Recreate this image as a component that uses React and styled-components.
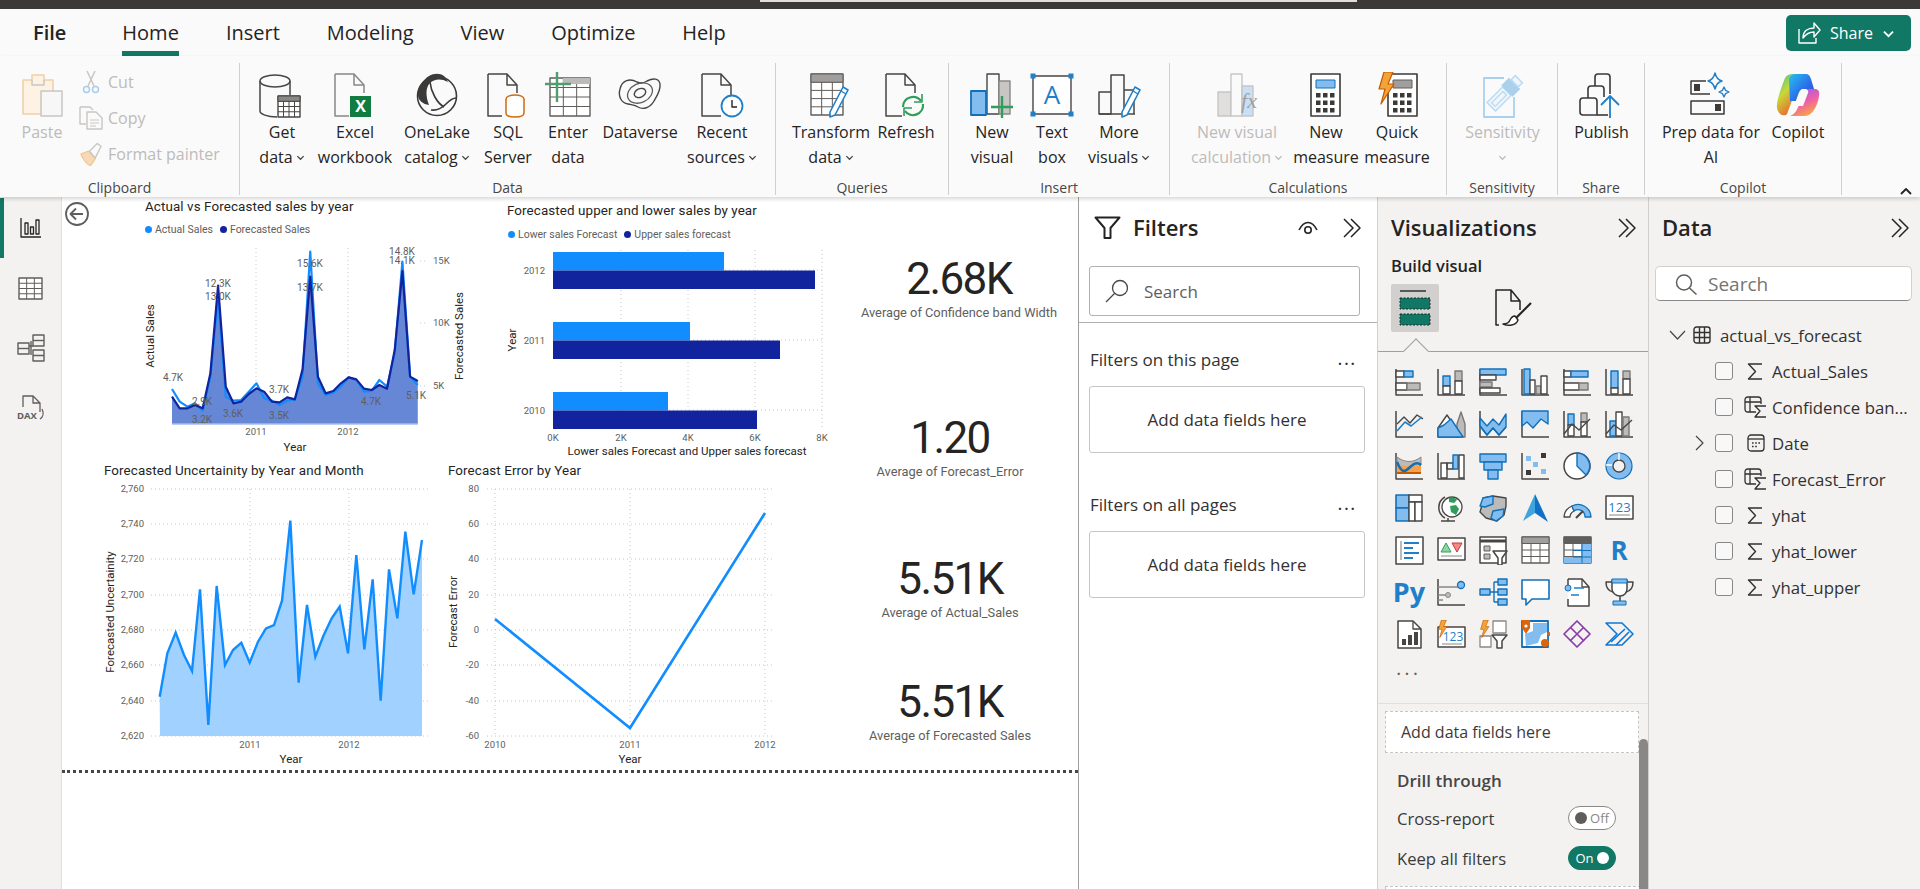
import React from 'react';
import styled, { createGlobalStyle } from 'styled-components';

const GREEN = '#117865';
const INK = '#484644';
const BLUE = '#118dff';
const NAVY = '#12239e';
const UI_FONT = '"Open Sans", "Noto Sans", sans-serif';
const CHART_FONT = 'Roboto, "Liberation Sans", sans-serif';

const Global = createGlobalStyle`
    html, body { margin: 0; padding: 0; background: #fff; }
    body { font-family: ${UI_FONT}; color: #252423; }
`;

const Page = styled.div`
    width: 1920px;
    height: 889px;
    overflow: hidden;
    display: flex;
    flex-direction: column;
`;
const TitleBar = styled.div`
    height: 9px;
    flex: none;
    background: #3b3a39;
`;
const TitleSlot = styled.div`
    width: 597px;
    height: 2px;
    margin-left: 760px;
    background: #e1dfdd;
`;
const TabRow = styled.div`
    height: 47px;
    flex: none;
    display: flex;
    padding-left: 33px;
    gap: 47px;
    background: #fafafa;
    position: relative;
`;
const Tab = styled.div`
    height: 47px;
    box-sizing: border-box;
    padding-top: 10px;
    line-height: 28px;
    font-size: 20px;
    font-weight: ${p => p.$weight || 400};
    margin-right: ${p => p.$after || 0}px;
    border-bottom: 5px solid ${p => (p.$active ? GREEN : 'transparent')};
`;
const ShareButton = styled.div`
    position: absolute;
    left: 1786px;
    top: 6px;
    width: 125px;
    height: 36px;
    border-radius: 5px;
    background: ${GREEN};
    color: #fff;
    display: flex;
    align-items: center;
    gap: 9px;
    padding-left: 11px;
    box-sizing: border-box;
    font-size: 16px;
`;
const Ribbon = styled.div`
    height: 141px;
    flex: none;
    display: flex;
    background: #fafafa;
    box-shadow: 0 2px 4px rgba(0, 0, 0, 0.16);
    position: relative;
    z-index: 2;
`;
const Group = styled.div`
    width: ${p => p.$w}px;
    height: 132px;
    margin-top: 7px;
    box-sizing: border-box;
    border-right: 1px solid #d2d0ce;
    display: flex;
    flex-direction: column;
    flex: none;
`;
const GroupBody = styled.div`
    flex: 1;
    display: flex;
    min-height: 0;
`;
const GroupLabel = styled.div`
    height: 14px;
    line-height: 14px;
    text-align: center;
    font-size: 14px;
    color: ${INK};
    white-space: nowrap;
`;
const RibbonButton = styled.div`
    width: ${p => p.$w}px;
    flex: none;
    display: flex;
    flex-direction: column;
    align-items: center;
    padding-top: 9px;
    color: ${p => (p.$off ? '#bdbbb9' : '#252423')};
    font-size: 16px;
`;
const IconSlot = styled.div`
    height: 46px;
    display: flex;
    align-items: center;
    justify-content: center;
    flex: none;
`;
const ButtonLine = styled.div`
    line-height: 25px;
    height: 25px;
    margin-top: ${p => (p.$first ? 2 : 0)}px;
    white-space: nowrap;
    display: flex;
    align-items: center;
    gap: 3px;
`;
const PasteColumn = styled.div`
    width: 78px;
    flex: none;
`;
const ClipList = styled.div`
    display: flex;
    flex-direction: column;
    padding-top: 6px;
    gap: 10px;
`;
const ClipRow = styled.div`
    height: 26px;
    display: flex;
    align-items: center;
    gap: 5px;
    font-size: 16px;
    color: #bdbbb9;
    white-space: nowrap;
`;
const ClipIcon = styled.div`
    width: 25px;
    display: flex;
    justify-content: center;
`;
const Collapse = styled.div`
    position: absolute;
    left: 1899px;
    top: 124px;
`;

const Workspace = styled.div`
    flex: 1;
    display: flex;
    min-height: 0;
`;
const NavRail = styled.div`
    width: 62px;
    flex: none;
    box-sizing: border-box;
    background: #f3f2f1;
    border-right: 1px solid #e1dfdd;
    display: flex;
    flex-direction: column;
`;
const NavItem = styled.div`
    height: 60px;
    margin-top: ${p => p.$top || 0}px;
    display: flex;
    align-items: center;
    justify-content: center;
    box-sizing: border-box;
    border-left: 4px solid ${p => (p.$active ? GREEN : 'transparent')};
    padding-right: 4px;
`;
const Canvas = styled.div`
    width: 1017px;
    flex: none;
    box-sizing: border-box;
    border-right: 1px solid #a19f9d;
    background: #fff;
    position: relative;
`;
const Board = styled.div`
    height: 576px;
    box-sizing: border-box;
    border-bottom: 3px dotted #484644;
    display: grid;
    grid-template-columns: 778px 1fr;
`;
const BackButton = styled.div`
    position: absolute;
    left: 3px;
    top: 5px;
`;
const ChartsColumn = styled.div`
    display: grid;
    grid-template-rows: 261px 312px;
`;
const ChartRow = styled.div`
    display: flex;
    min-height: 0;
`;
const Visual = styled.div`
    width: ${p => p.$w}px;
    flex: none;
    box-sizing: border-box;
    padding-left: ${p => p.$left}px;
    padding-top: ${p => p.$top}px;
`;
const VisualTitle = styled.div`
    font-family: ${CHART_FONT};
    font-size: 13.4px;
    font-weight: 400;
    letter-spacing: 0.1px;
    line-height: 16px;
    color: #252423;
    white-space: nowrap;
`;
const Legend = styled.div`
    display: flex;
    align-items: center;
    gap: 3px;
    height: 14px;
    margin-top: ${p => p.$top}px;
    margin-left: ${p => p.$left}px;
    font-family: ${CHART_FONT};
    font-size: 10.5px;
    color: #605e5c;
    white-space: nowrap;
`;
const LegendDot = styled.span`
    width: 7px;
    height: 7px;
    border-radius: 50%;
    background: ${p => p.$color};
    margin-left: ${p => p.$gap || 0}px;
`;
const Plot = styled.svg`
    display: block;
    overflow: visible;
    margin-top: ${p => p.$top || 0}px;
`;
const Tick = styled.text`
    font-family: ${CHART_FONT};
    font-size: 9.5px;
    fill: #605e5c;
    dominant-baseline: middle;
`;
const AxisTitle = styled.text`
    font-family: ${CHART_FONT};
    font-size: 11.5px;
    fill: #252423;
    text-anchor: middle;
    dominant-baseline: middle;
`;
const DataLabel = styled.text`
    font-family: ${CHART_FONT};
    font-size: 10px;
    fill: #605e5c;
    text-anchor: middle;
    dominant-baseline: middle;
`;
const KpiColumn = styled.div`
    display: flex;
    flex-direction: column;
    padding-right: 18px;
`;
const Kpi = styled.div`
    margin-top: ${p => p.$top}px;
    padding-left: ${p => p.$shift || 0}px;
    display: flex;
    flex-direction: column;
    align-items: center;
    height: 68px;
`;
const KpiValue = styled.div`
    font-family: ${CHART_FONT};
    font-size: 44px;
    line-height: 50px;
    letter-spacing: -1.6px;
    color: #252423;
    white-space: nowrap;
`;
const KpiLabel = styled.div`
    font-family: ${CHART_FONT};
    font-size: 12.8px;
    line-height: 16px;
    margin-top: 1px;
    color: #605e5c;
    white-space: nowrap;
`;

const FiltersPane = styled.div`
    width: 299px;
    flex: none;
    box-sizing: border-box;
    background: #fff;
    border-right: 1px solid #d2d0ce;
    padding-top: 16px;
`;
const PaneHead = styled.div`
    height: 30px;
    display: flex;
    align-items: center;
    padding-left: ${p => p.$left}px;
    position: relative;
`;
const PaneTitle = styled.div`
    font-size: 22px;
    line-height: 28px;
    margin-top: -2px;
    font-weight: 600;
    color: #252423;
    margin-left: ${p => p.$gap || 0}px;
`;
const HeadIcons = styled.div`
    position: absolute;
    top: 5px;
    right: ${p => p.$right}px;
    display: flex;
    align-items: center;
    gap: 24px;
`;
const FilterSearch = styled.div`
    margin: 23px 0 0 10px;
    width: 271px;
    height: 50px;
    box-sizing: border-box;
    border: 1px solid #b3b0ad;
    border-radius: 3px;
    display: flex;
    align-items: center;
    padding-left: 15px;
    gap: 15px;
    font-size: 17px;
    color: #605e5c;
`;
const PaneRule = styled.div`
    margin-top: 6px;
    height: 1px;
    background: #b3b0ad;
`;
const FilterHead = styled.div`
    margin: ${p => p.$top}px 20px 0 11px;
    height: 24px;
    display: flex;
    justify-content: space-between;
    align-items: center;
    font-size: 17px;
    color: #323130;
`;
const Dots = styled.span`
    letter-spacing: ${p => p.$spread || 2}px;
    line-height: 10px;
    font-size: 16px;
    color: ${p => p.$color || '#323130'};
    font-weight: 600;
    margin-top: ${p => p.$lift || 0}px;
`;
const DropBox = styled.div`
    margin: 15px 0 0 10px;
    width: 276px;
    height: 67px;
    box-sizing: border-box;
    border: 1px solid #c8c6c4;
    border-radius: 3px;
    display: flex;
    align-items: center;
    justify-content: center;
    font-size: 17px;
    color: #323130;
`;

const VizPane = styled.div`
    width: 271px;
    flex: none;
    box-sizing: border-box;
    background: #f3f2f1;
    border-right: 1px solid #d2d0ce;
    padding-top: 16px;
    position: relative;
    overflow: hidden;
`;
const BuildLabel = styled.div`
    margin: 13px 0 0 13px;
    line-height: 20px;
    font-size: 16.5px;
    font-weight: 600;
    color: #252423;
`;
const BuildTabs = styled.div`
    margin-top: 8px;
    padding: 0 0 19px 13px;
    display: flex;
    align-items: center;
    gap: 56px;
    border-bottom: 1px solid #a19f9d;
    position: relative;
`;
const BuildTile = styled.div`
    width: 48px;
    height: 48px;
    border-radius: 2px;
    background: #d2d0ce;
    display: flex;
    align-items: center;
    justify-content: center;
`;
const Notch = styled.div`
    position: absolute;
    left: 29px;
    bottom: -9px;
    width: 17px;
    height: 17px;
    background: #f3f2f1;
    border-left: 1px solid #a19f9d;
    border-top: 1px solid #a19f9d;
    transform: rotate(45deg);
`;
const VizGrid = styled.div`
    margin: 9px 0 0 10px;
    display: grid;
    grid-template-columns: repeat(6, 42px);
    grid-auto-rows: 42px;
    place-items: center;
    height: 336px;
`;
const WellRule = styled.div`
    margin-top: 6px;
    height: 1px;
    background: #e1dfdd;
`;
const FieldWell = styled.div`
    margin: 7px 0 0 7px;
    width: 254px;
    height: 42px;
    box-sizing: border-box;
    border: 1px dashed #c8c6c4;
    background: #fff;
    display: flex;
    align-items: center;
    padding-left: 15px;
    font-size: 16px;
    color: #3b3a39;
`;
const DrillTitle = styled.div`
    margin: 17px 0 0 19px;
    line-height: 22px;
    font-size: 17px;
    font-weight: 600;
    color: ${INK};
`;
const ToggleRow = styled.div`
    margin: ${p => p.$top}px 0 0 19px;
    width: 219px;
    height: 24px;
    display: flex;
    align-items: center;
    justify-content: space-between;
    font-size: 16.6px;
    color: #3b3a39;
`;
const Toggle = styled.div`
    width: 48px;
    height: 24px;
    box-sizing: border-box;
    border-radius: 12px;
    border: 1px solid ${p => (p.$on ? GREEN : '#8a8886')};
    background: ${p => (p.$on ? GREEN : '#fff')};
    color: ${p => (p.$on ? '#fff' : '#8a8886')};
    display: flex;
    flex-direction: ${p => (p.$on ? 'row-reverse' : 'row')};
    align-items: center;
    justify-content: center;
    gap: 3px;
    font-size: 13px;
`;
const ToggleKnob = styled.span`
    width: 12px;
    height: 12px;
    border-radius: 50%;
    background: ${p => (p.$on ? '#fff' : '#605e5c')};
`;
const NextWell = styled.div`
    margin: 16px 0 0 7px;
    width: 254px;
    height: 20px;
    border: 1px dashed #c8c6c4;
    background: #fff;
`;
const ScrollThumb = styled.div`
    position: absolute;
    right: 0;
    top: 542px;
    width: 9px;
    height: 160px;
    border-radius: 5px 5px 0 0;
    background: #8a8886;
`;

const DataPane = styled.div`
    flex: 1;
    background: #f3f2f1;
    padding-top: 16px;
    min-width: 0;
`;
const DataSearch = styled.div`
    margin: 23px 0 0 6px;
    width: 257px;
    height: 35px;
    box-sizing: border-box;
    background: #fff;
    border: 1px solid #d2d0ce;
    border-bottom-color: #8a8886;
    border-radius: 5px;
    display: flex;
    align-items: center;
    padding: 1px 0 0 19px;
    gap: 10px;
    font-size: 19px;
    color: #767472;
`;
const Tree = styled.div`
    margin-top: 16px;
`;
const TreeHead = styled.div`
    height: 36px;
    display: flex;
    align-items: center;
    padding-left: 20px;
    gap: 7px;
    font-size: 16.8px;
    color: #323130;
`;
const TreeName = styled.span`
    margin-left: 2px;
`;
const TreeRow = styled.div`
    height: 36px;
    display: flex;
    align-items: center;
    padding-left: 46px;
    font-size: 16.8px;
    color: #323130;
    white-space: nowrap;
`;
const Expander = styled.div`
    width: 9px;
    margin-right: 11px;
    display: flex;
`;
const CheckBox = styled.span`
    width: 18px;
    height: 18px;
    box-sizing: border-box;
    border: 1px solid #8a8886;
    border-radius: 3px;
    background: #f8f8f8;
    margin-right: 11px;
    flex: none;
`;
const FieldIcon = styled.div`
    width: 23px;
    margin-right: 5px;
    display: flex;
    justify-content: center;
`;

// --- small drawing helpers -------------------------------------------------

const Svg = ({ w = 46, h = 46, v, children }) => (
    <svg width={w} height={h} viewBox={v || `0 0 ${w} ${h}`} fill="none" strokeLinejoin="round">
        {children}
    </svg>
);

const tones = {
    w: ['#fff', '#484644'],
    b: ['#83bdf0', '#1170b8'],
    g: ['#bdbbb9', '#7a7876'],
    n: ['none', '#484644'],
};
const Box = ({ x, y, w, h, k = 'w', sw = 1.4 }) => (
    <rect x={x} y={y} width={w} height={h} fill={tones[k][0]} stroke={tones[k][1]} strokeWidth={sw} />
);

const Cells = ({ x, y, w, h, cols, rows, head, color = '#605e5c' }) => {
    const lines = [];
    for (let i = 1; i < cols; i++) lines.push(`M${x + (w * i) / cols} ${y}v${h}`);
    for (let i = 1; i < rows; i++) lines.push(`M${x} ${y + (h * i) / rows}h${w}`);
    return (
        <g>
            <rect x={x} y={y} width={w} height={h} fill="#fff" stroke={color} strokeWidth="1.4" />
            <path d={lines.join('')} stroke={color} strokeWidth="1" />
            {head && <rect x={x} y={y} width={w} height={h / rows} fill={head} stroke={color} strokeWidth="1" />}
        </g>
    );
};

const PageOutline = ({ color = '#484644', d = 'M3 2h19l10 11v8M22 2v11h10M3 2v42h14' }) => (
    <path d={d} stroke={color} strokeWidth="1.5" />
);

const Pencil = ({ x = 0, y = 0 }) => (
    <g transform={`translate(${x} ${y})`}>
        <path d="M2 28 L15 3 L20 6 L7 31 L2 33 Z" fill="#fff" stroke="#1f7fc9" strokeWidth="1.6" />
        <path d="M13 7l5 3" stroke="#1f7fc9" strokeWidth="1.4" />
    </g>
);

const Bolt = ({ x = 0, y = 0, s = 1 }) => (
    <path
        transform={`translate(${x} ${y}) scale(${s})`}
        d="M8 0h9l-5 12h6L5 32l4-15H3z"
        fill="#f2a33a"
        stroke="#c35a00"
        strokeWidth="1.2"
    />
);

const Chevron = ({ color = '#484644', size = 9 }) => (
    <svg width={size} height={size} viewBox="0 0 10 10" fill="none">
        <path d="M1.5 3.5L5 7l3.5-3.5" stroke={color} strokeWidth="1.4" />
    </svg>
);

const DoubleChevron = () => (
    <Svg w={20} h={20}>
        <path d="M2 1l9 9-9 9M9 1l9 9-9 9" stroke="#252423" strokeWidth="1.5" />
    </Svg>
);

// --- ribbon icons ----------------------------------------------------------

const PasteIcon = () => (
    <Svg w={44} h={46}>
        <path d="M3 8h9V3h12v5h9v34H3z" fill="#fdf2e3" stroke="#f0cfa5" strokeWidth="1.5" />
        <path d="M12 8v5h12V8" stroke="#c8c6c4" strokeWidth="1.5" />
        <rect x="21" y="19" width="21" height="25" fill="#f7f7f7" stroke="#c8c6c4" strokeWidth="1.5" />
    </Svg>
);
const CutIcon = () => (
    <Svg w={18} h={24}>
        <path d="M5 1l7 15M13 1L6 16" stroke="#c8c6c4" strokeWidth="1.5" />
        <circle cx="4.5" cy="19.5" r="3" stroke="#a9cdea" strokeWidth="1.5" />
        <circle cx="13.5" cy="19.5" r="3" stroke="#a9cdea" strokeWidth="1.5" />
    </Svg>
);
const CopyIcon = () => (
    <Svg w={24} h={24}>
        <path d="M1 1h10l3 3M7 18H1V1" stroke="#c8c6c4" strokeWidth="1.4" />
        <path d="M8 6h9l6 6v11H8z" fill="#fafafa" stroke="#c8c6c4" strokeWidth="1.4" />
        <path d="M11 14h9M11 17h9M11 20h6" stroke="#c8c6c4" />
    </Svg>
);
const BrushIcon = () => (
    <Svg w={26} h={24}>
        <path d="M3 12l8-3 7 8-5 7c-3-1-8-6-10-12z" fill="#f7d9b8" stroke="#f0c595" strokeWidth="1.3" />
        <path d="M12 9l8-8 4 3-6 12z" fill="#fafafa" stroke="#c8c6c4" strokeWidth="1.4" />
    </Svg>
);
const GetDataIcon = () => (
    <Svg>
        <ellipse cx="16" cy="9" rx="15" ry="6" stroke={INK} strokeWidth="1.5" />
        <path d="M1 9v30c0 3 7 6 17 6M31 9v14" stroke={INK} strokeWidth="1.5" />
        <Cells x={19} y={24} w={22} h={21} cols={4} rows={4} head="#8a8886" color={INK} />
    </Svg>
);
const ExcelIcon = () => (
    <Svg>
        <PageOutline color="#8a8886" />
        <rect x="18" y="24" width="21" height="21" fill="#107c41" />
        <text x="28.5" y="40" textAnchor="middle" fill="#fff" fontSize="16" fontWeight="700" fontFamily={UI_FONT}>X</text>
    </Svg>
);
const OneLakeIcon = () => (
    <Svg>
        <circle cx="23" cy="24" r="19.5" fill="#fafafa" stroke="#3b3a39" strokeWidth="1.6" />
        <path d="M4 24C3 15 10 7 15 4c5-3 11-3 15 0 2 2 3 4 4 6-7-4-14-3-18 1-5 5-4 14-1 22-6-1-10-4-11-9z" fill="#3b3a39" />
        <path d="M16 10c1 10 7 21 14 25" stroke="#3b3a39" strokeWidth="1.6" />
        <path d="M17 38c7 1 11-2 15-6 3-3 7-6 10-6" stroke="#3b3a39" strokeWidth="1.6" />
    </Svg>
);
const SqlIcon = () => (
    <Svg>
        <PageOutline />
        <ellipse cx="30" cy="27" rx="9" ry="4" fill="#fff" stroke="#d06b10" strokeWidth="1.5" />
        <path d="M21 27v14c0 3 4 4 9 4s9-1 9-4V27" stroke="#d06b10" strokeWidth="1.5" fill="#fff" />
    </Svg>
);
const EnterIcon = () => (
    <Svg>
        <Cells x={5} y={6} w={40} h={38} cols={3} rows={4} color="#605e5c" />
        <rect x="18" y="6" width="27" height="6" fill="#bdbbb9" />
        <path d="M12 0v30M0 12h26" stroke="#4f9e6e" strokeWidth="2.4" />
    </Svg>
);
const DataverseIcon = () => (
    <Svg>
        <path d="M3 17C5 8 13 6 20 10c4 2 7 1 10-1 6-3 12-3 13 3 1 6-3 12-6 17-4 7-11 9-16 6-3-2-6-2-10-3C4 31 1 24 3 17z" stroke="#484644" strokeWidth="1.4" />
        <ellipse cx="23" cy="21" rx="13" ry="9.5" transform="rotate(-25 23 21)" stroke="#605e5c" strokeWidth="1.3" />
        <ellipse cx="23" cy="21" rx="6" ry="4.2" transform="rotate(-25 23 21)" stroke="#484644" strokeWidth="1.4" />
    </Svg>
);
const RecentIcon = () => (
    <Svg>
        <PageOutline d="M3 2h19l10 11v13M22 2v11h10M3 2v42h19" />
        <circle cx="33" cy="34" r="10.5" fill="#fff" stroke="#1f7fc9" strokeWidth="1.8" />
        <path d="M33 28v7h5" stroke="#252423" strokeWidth="1.4" />
    </Svg>
);
const TransformIcon = () => (
    <Svg>
        <Cells x={3} y={2} w={32} h={41} cols={3} rows={5} head="#a19f9d" color="#605e5c" />
        <Pencil x={20} y={12} />
    </Svg>
);
const RefreshIcon = () => (
    <Svg>
        <PageOutline d="M3 2h19l10 11v8M22 2v11h10M3 2v42h16" />
        <path d="M20 35a10 10 0 0 1 18-6M40 32a10 10 0 0 1-18 7" stroke="#2f9e5b" strokeWidth="2.2" />
        <path d="M39 22v8h-8M21 44v-8h8" stroke="#2f9e5b" strokeWidth="1.6" />
    </Svg>
);
const NewVisualIcon = () => (
    <Svg>
        <Box x={18} y={2} w={12} h={40} k="n" />
        <rect x="30" y="9" width="11" height="33" fill="#c8c6c4" stroke="#8a8886" strokeWidth="1.4" />
        <rect x="2" y="19" width="15" height="24" fill="#83bdf0" stroke="#1170b8" strokeWidth="1.8" />
        <path d="M33 24v22M22 35h22" stroke="#2f9e5b" strokeWidth="2.4" />
    </Svg>
);
const TextBoxIcon = () => (
    <Svg>
        <rect x="4" y="4" width="38" height="38" fill="#fff" stroke={INK} strokeWidth="1.4" />
        {[[4, 4], [42, 4], [4, 42], [42, 42]].map(([x, y]) => (
            <rect key={`${x}-${y}`} x={x - 2.5} y={y - 2.5} width="5" height="5" fill="#1f7fc9" />
        ))}
        <text x="23" y="32" textAnchor="middle" fill="#1f7fc9" fontSize="26" fontFamily={UI_FONT}>A</text>
    </Svg>
);
const MoreVisualsIcon = () => (
    <Svg>
        <path d="M3 42V20h12V42zM15 42V3h13v39M28 42V18h10v24" stroke={INK} strokeWidth="1.5" />
        <path d="M3 42h36" stroke={INK} strokeWidth="1.5" />
        <Pencil x={24} y={12} />
    </Svg>
);
const VisualCalcIcon = () => (
    <Svg>
        <rect x="4" y="20" width="13" height="24" fill="#e1dfdd" stroke="#c8c6c4" strokeWidth="1.4" />
        <rect x="17" y="2" width="11" height="42" fill="#fafafa" stroke="#c8c6c4" strokeWidth="1.4" />
        <rect x="28" y="14" width="11" height="30" fill="#c7e0f7" stroke="#c8c6c4" strokeWidth="1.4" />
        <text x="35" y="36" textAnchor="middle" fontSize="22" fontStyle="italic" fill="#a19f9d" fontFamily="Liberation Serif, serif">fx</text>
    </Svg>
);
const CalcBody = ({ top = '#a19f9d', x = 0 }) => {
    const keys = [];
    for (let r = 0; r < 3; r++) for (let c = 0; c < 3; c++) keys.push([c, r]);
    return (
        <g transform={`translate(${x} 0)`}>
            <rect x="1" y="2" width="29" height="42" fill="#fff" stroke="#3b3a39" strokeWidth="1.6" />
            <rect x="6" y="8" width="19" height="8" fill={top} stroke={top === '#a19f9d' ? '#605e5c' : '#1170b8'} />
            {keys.map(([c, r]) => (
                <rect key={`${c}${r}`} x={6 + c * 7} y={21 + r * 7.5} width="4.5" height="4.5" fill="#3b3a39" />
            ))}
        </g>
    );
};
const MeasureIcon = () => (
    <Svg w={32}>
        <CalcBody top="#83bdf0" />
    </Svg>
);
const QuickMeasureIcon = () => (
    <Svg w={42}>
        <CalcBody x={11} />
        <Bolt x={0} y={0} />
    </Svg>
);
const SensitivityIcon = () => (
    <Svg>
        <path d="M24 6H4v39h30V25" stroke="#a9d1ee" strokeWidth="1.8" />
        <g transform="rotate(-45 24 22)">
            <rect x="6" y="16" width="22" height="12" fill="#eef6fc" stroke="#bcdaf2" strokeWidth="1.5" />
            <rect x="9" y="19.5" width="16" height="5" stroke="#bcdaf2" strokeWidth="1.3" />
            <rect x="28" y="14" width="11" height="16" fill="#a9d1ee" />
            <rect x="39" y="17" width="6" height="10" fill="#eef6fc" stroke="#bcdaf2" strokeWidth="1.5" />
        </g>
    </Svg>
);
const PublishIcon = () => (
    <Svg>
        <g stroke="#3b3a39" strokeWidth="1.6">
            <path d="M1 29c0-2 1-3 3-3h11c2 0 3 1 3 3v14H4c-2 0-3-1-3-3z" />
            <path d="M9 26v-9c0-2 1-3 3-3h10c2 0 3 1 3 3v8" />
            <path d="M16 14V5c0-2 1-3 3-3h9c2 0 3 1 3 3v17" />
            <path d="M18 43h11" />
        </g>
        <path d="M31 46V24M22 33l9-9 9 9" stroke="#1f7fc9" strokeWidth="1.8" />
    </Svg>
);
const PrepIcon = () => (
    <Svg w={42}>
        <path d="M16 9H1v13h19" stroke="#3b3a39" strokeWidth="1.5" />
        <rect x="4" y="12" width="6" height="7" fill="#3b3a39" />
        <rect x="1" y="29" width="33" height="13" fill="#fafafa" stroke="#3b3a39" strokeWidth="1.5" />
        <rect x="25" y="32" width="6" height="7" fill="#3b3a39" />
        <path d="M25 1c1 4 3 7 7 8-4 1-6 4-7 8-1-4-3-7-7-8 4-1 6-4 7-8z" fill="#fafafa" stroke="#1f7fc9" strokeWidth="1.5" />
        <path d="M34 15l1.6 3.4 3.4 1.6-3.4 1.6L34 25l-1.6-3.4L29 20l3.4-1.6z" fill="#fafafa" stroke="#1f7fc9" strokeWidth="1.3" />
    </Svg>
);
const CopilotIcon = () => (
    <Svg>
        <defs>
            <linearGradient id="copA" x1="0" y1="0" x2="1" y2="1">
                <stop offset="0" stopColor="#26c0f0" />
                <stop offset="0.6" stopColor="#2b6be8" />
                <stop offset="1" stopColor="#4a3fd0" />
            </linearGradient>
            <linearGradient id="copB" x1="0" y1="0" x2="0.6" y2="1">
                <stop offset="0" stopColor="#2fc2a0" />
                <stop offset="0.45" stopColor="#c8d83a" />
                <stop offset="1" stopColor="#f0582a" />
            </linearGradient>
            <linearGradient id="copC" x1="0" y1="0" x2="0.5" y2="1">
                <stop offset="0" stopColor="#8b5cf6" />
                <stop offset="0.6" stopColor="#ee5fa7" />
                <stop offset="1" stopColor="#f8a04a" />
            </linearGradient>
        </defs>
        <path d="M10 6c2-3 4-4 7-4h10L12 42c-2 3-9 1-10-6-1-6 4-20 8-30z" fill="url(#copB)" />
        <path d="M14 7c1-3 3-5 7-5h9c4 0 5 2 6 5l3 10H27l-5 12H15z" fill="url(#copA)" />
        <path d="M27 17h13c3 0 5 2 4 7-1 8-6 20-14 20H15c5-2 7-6 9-11z" fill="url(#copC)" />
        <path d="M27 17c-2 1-3 3-4 6l-4 11h9l5-13c1-2-1-4-3-4z" fill="#fafafa" />
    </Svg>
);

// --- rail icons ------------------------------------------------------------

const ReportNav = () => (
    <Svg w={22} h={22}>
        <path d="M1 1v19h20M5 6v11h3V6zM10.5 10v7h3v-7zM16 3v14h3V3z" stroke="#252423" strokeWidth="1.3" />
    </Svg>
);
const TableNav = () => (
    <Svg w={25} h={23}>
        <Cells x={1} y={1} w={23} h={21} cols={3} rows={4} color="#605e5c" />
    </Svg>
);
const ModelNav = () => (
    <Svg w={28} h={28}>
        <g stroke="#605e5c" strokeWidth="1.4">
            <rect x="1" y="9" width="11" height="11" />
            <path d="M1 14.5h11" />
            <rect x="16" y="1" width="11" height="11" />
            <path d="M16 6.5h11" />
            <rect x="16" y="16" width="11" height="11" />
            <path d="M16 21.5h11M12 12h4M14 7v14" />
        </g>
    </Svg>
);
const DaxNav = () => (
    <Svg w={28} h={26}>
        <path d="M6 12V1h10l7 7v9M16 1v7h7" stroke="#605e5c" strokeWidth="1.3" />
        <path d="M25 14c2 4 1 8-2 10" stroke="#605e5c" strokeWidth="1.3" />
        <text x="0" y="24" fontSize="9.5" fontWeight="700" fill="#605e5c" fontFamily={UI_FONT}>DAX</text>
    </Svg>
);

// --- visualizations gallery ------------------------------------------------

const Ax = () => <path d="M1 1v26h27" stroke={INK} strokeWidth="1.5" />;
const Tile = ({ children }) => <Svg w={29} h={29}>{children}</Svg>;
const Poly = ({ p, k = 'b' }) => <polygon points={p} fill={tones[k][0]} stroke={tones[k][1]} strokeWidth="1.4" />;
const Line = ({ p, c = INK, sw = 1.4 }) => <polyline points={p} stroke={c} strokeWidth={sw} fill="none" />;
const Lightning = () => <Bolt x={0} y={0} s={0.55} />;

const GalleryText = styled.span`
    font-family: ${UI_FONT};
    font-weight: 700;
    font-size: ${p => p.$size}px;
    line-height: 30px;
    color: #1f7fc9;
`;

const galleryTiles = [
    <Tile><Ax /><Box x={1} y={3} w={8} h={6} /><Box x={9} y={3} w={9} h={6} k="b" /><Box x={1} y={15} w={11} h={7} /><Box x={12} y={15} w={13} h={7} k="g" /></Tile>,
    <Tile><Ax /><Box x={6} y={8} w={7} h={10} k="b" /><Box x={6} y={18} w={7} h={8} /><Box x={18} y={3} w={7} h={10} k="g" /><Box x={18} y={13} w={7} h={13} /></Tile>,
    <Tile><Ax /><Box x={1} y={1} w={26} h={6} k="b" /><Box x={1} y={7} w={16} h={5} /><Box x={1} y={14} w={12} h={5} k="g" /><Box x={1} y={20} w={20} h={5} /></Tile>,
    <Tile><Ax /><Box x={3} y={1} w={6} h={25} k="b" /><Box x={9} y={12} w={5} h={14} /><Box x={15} y={18} w={5} h={8} k="g" /><Box x={20} y={8} w={6} h={18} /></Tile>,
    <Tile><Ax /><Box x={1} y={3} w={7} h={6} /><Box x={8} y={3} w={17} h={6} k="b" /><Box x={1} y={15} w={15} h={7} /><Box x={16} y={15} w={9} h={7} k="g" /></Tile>,
    <Tile><Ax /><Box x={6} y={3} w={7} h={17} k="b" /><Box x={6} y={20} w={7} h={6} /><Box x={18} y={3} w={7} h={8} k="g" /><Box x={18} y={11} w={7} h={15} /></Tile>,

    <Tile><Ax /><Line p="2,14 9,7 15,13 22,5 28,9" /><Line p="2,21 10,12 16,16 27,7" c="#1f7fc9" sw={1.6} /></Tile>,
    <Tile><Poly p="20,27 20,14 24,2 28,14 28,27" k="g" /><Poly p="1,27 1,18 10,5 16,14 22,27" k="w" /><Poly p="1,27 1,18 7,15 14,9 26,27" k="b" /></Tile>,
    <Tile><Ax /><Poly p="1,8 8,16 14,9 20,15 27,4 27,17 20,25 14,18 8,25 1,16" /><Line p="1,16 8,25 14,18 20,25 27,17" c="#1170b8" /></Tile>,
    <Tile><Ax /><Poly p="1,1 27,1 27,14 20,9 12,18 6,12 1,16" /></Tile>,
    <Tile><Ax /><Box x={5} y={4} w={6} h={11} k="b" /><Box x={5} y={15} w={6} h={11} /><Box x={18} y={3} w={6} h={9} k="g" /><Box x={18} y={12} w={6} h={14} /><Line p="1,24 9,14 16,20 27,9" /></Tile>,
    <Tile><Ax /><Box x={5} y={11} w={6} h={15} k="b" /><Box x={11} y={2} w={6} h={24} /><Box x={18} y={7} w={6} h={19} k="g" /><Line p="1,24 9,15 16,20 27,10" /></Tile>,

    <Tile><Ax /><path d="M2 5c8 6 16 6 24 0v8c-8 6-16 6-24 0z" fill="#bdbbb9" stroke="#8a8886" /><path d="M2 14h24v6H2z" fill="#f7a24a" /><path d="M2 10c5 12 8 10 12 6s8-7 12-3" stroke="#1170b8" strokeWidth="2.6" /><path d="M2 21h24" stroke="#c35a00" strokeWidth="2" /></Tile>,
    <Tile><Ax /><Box x={4} y={11} w={6} h={15} /><Box x={10} y={11} w={6} h={6} k="n" /><Box x={16} y={3} w={5} h={14} k="b" /><Box x={22} y={3} w={5} h={23} /></Tile>,
    <Tile><Box x={1} y={2} w={26} h={8} k="b" /><Box x={5} y={10} w={18} h={8} k="b" /><Box x={9} y={18} w={10} h={9} k="b" /></Tile>,
    <Tile><Ax /><rect x="5" y="4" width="5" height="5" fill="#83bdf0" /><rect x="20" y="1" width="5" height="5" fill="#3b3a39" /><rect x="12" y="10" width="5" height="5" fill="#83bdf0" /><rect x="5" y="18" width="5" height="5" fill="#3b3a39" /><rect x="20" y="17" width="5" height="5" fill="#83bdf0" /></Tile>,
    <Tile><circle cx="14" cy="14" r="13" fill="#fff" stroke={INK} strokeWidth="1.5" /><path d="M14 14V1a13 13 0 0 1 9 22z" fill="#83bdf0" stroke="#1170b8" strokeWidth="1.4" /></Tile>,
    <Tile><circle cx="14" cy="14" r="9.5" stroke="#83bdf0" strokeWidth="7" /><circle cx="14" cy="14" r="13" stroke="#1170b8" strokeWidth="1.2" /><circle cx="14" cy="14" r="6" fill="#f3f2f1" stroke={INK} strokeWidth="1.3" /><path d="M1 13h6M14 1v7" stroke="#fff" strokeWidth="1.4" /></Tile>,

    <Tile><Box x={1} y={1} w={13} h={13} k="b" sw={1.6} /><Box x={1} y={14} w={13} h={13} k="b" sw={1.6} /><Box x={14} y={1} w={13} h={7} /><Box x={14} y={8} w={6} h={19} /><Box x={20} y={8} w={7} h={19} /></Tile>,
    <Tile><path d="M8 3a12 12 0 0 0 0 21M4 27h14M11 24v3" stroke={INK} strokeWidth="1.5" /><circle cx="15" cy="13" r="10" fill="#fff" stroke={INK} strokeWidth="1.3" /><path d="M12 4c3-1 7 0 8 2l-3 3-5-1zM13 12l6-1 3 4-3 6-5-3z" fill="#2f9e5b" /></Tile>,
    <Tile><path d="M4 4l10-2 13 2v8l-2 9-7 6-11-3-6-6 2-7z" fill="#bdbbb9" stroke={INK} strokeWidth="1.4" /><path d="M4 4l10-2v8l-8 3-5-1z" fill="#83bdf0" stroke="#1170b8" strokeWidth="1.4" /><path d="M14 17l11-2-1 7-7 5-5-3z" fill="#83bdf0" stroke="#1170b8" strokeWidth="1.4" /></Tile>,
    <Tile><polygon points="14,0 2,27 14,19" fill="#3fa3de" /><polygon points="14,0 14,19 27,28" fill="#1170c4" /></Tile>,
    <Tile><path d="M1 23a13 13 0 0 1 8-11l2 5a7 7 0 0 0-4 6z" fill="#fff" stroke={INK} strokeWidth="1.3" /><path d="M9 12a13 13 0 0 1 19 11h-6a7 7 0 0 0-11-6z" fill="#83bdf0" stroke="#1170b8" strokeWidth="1.3" /><path d="M13 24l7-7" stroke={INK} strokeWidth="2.2" /></Tile>,
    <Tile><rect x="1" y="2" width="27" height="23" fill="#fff" stroke={INK} strokeWidth="1.5" /><text x="14.5" y="18" textAnchor="middle" fontSize="13" fill="#1f7fc9" fontFamily={UI_FONT}>123</text><path d="M4 21h21" stroke="#8a8886" /></Tile>,

    <Tile><rect x="1" y="1" width="27" height="27" fill="#fff" stroke={INK} strokeWidth="1.5" /><path d="M6 5v19" stroke="#bdbbb9" strokeWidth="2" /><path d="M9 7h15M9 12h9M9 17h15M9 22h9" stroke="#1f7fc9" strokeWidth="2.2" /></Tile>,
    <Tile><rect x="1" y="2" width="27" height="22" fill="#fff" stroke={INK} strokeWidth="1.5" /><polygon points="9,7 4,16 14,16" fill="#8fd3a5" stroke="#2f9e5b" /><polygon points="15,7 25,7 20,16" fill="#f28a8a" stroke="#d13438" /><path d="M4 20h21" stroke="#8a8886" /></Tile>,
    <Tile><rect x="1" y="1" width="26" height="26" fill="#fff" stroke={INK} strokeWidth="1.5" /><path d="M1 5h26" stroke={INK} strokeWidth="3" /><rect x="5" y="10" width="6" height="5" fill="#bdbbb9" stroke="#605e5c" /><rect x="5" y="18" width="6" height="5" fill="#bdbbb9" stroke="#605e5c" /><path d="M14 15h14l-5 7v7h-4v-7z" fill="#fff" stroke={INK} strokeWidth="1.5" /></Tile>,
    <Tile><Cells x={1} y={1} w={27} h={26} cols={3} rows={4} head="#a19f9d" /></Tile>,
    <Tile><Cells x={1} y={1} w={27} h={26} cols={3} rows={4} head="#605e5c" /><rect x="19" y="8" width="9" height="19" fill="#83bdf0" /><rect x="1" y="21" width="18" height="6" fill="#83bdf0" /><path d="M10 14.5h18M10 21h18M19 8v19" stroke="#1170b8" /></Tile>,
    <GalleryText $size={26}>R</GalleryText>,

    <GalleryText $size={27}>Py</GalleryText>,
    <Tile><path d="M1 1v26h27" stroke={INK} strokeWidth="1.5" /><path d="M1 9h20M1 17h9M1 22h5" stroke="#8a8886" strokeWidth="1.3" /><circle cx="24" cy="7" r="3.5" fill="#83bdf0" stroke="#1170b8" strokeWidth="1.3" /><circle cx="11" cy="17" r="2.5" fill="#bdbbb9" stroke="#8a8886" /></Tile>,
    <Tile><g fill="#83bdf0" stroke="#1170b8" strokeWidth="1.4"><rect x="1" y="11" width="10" height="6" /><rect x="19" y="1" width="9" height="6" /><rect x="19" y="11" width="9" height="6" /><rect x="19" y="21" width="9" height="6" /></g><path d="M11 14h8M15 4v20M15 4h4M15 24h4" stroke="#1170b8" strokeWidth="1.4" /></Tile>,
    <Tile><path d="M1 2h27v19H11l-6 6v-6H1z" fill="#fff" stroke="#1170b8" strokeWidth="1.6" /></Tile>,
    <Tile><path d="M5 1h14l7 8v19H5v-7M5 13V1" stroke={INK} strokeWidth="1.5" fill="#fff" /><path d="M19 1v8h7" stroke={INK} strokeWidth="1.3" /><circle cx="5" cy="10" r="3" fill="#83bdf0" stroke="#1170b8" /><path d="M11 10h10M8 17h8" stroke="#1f7fc9" strokeWidth="1.5" /></Tile>,
    <Tile><path d="M7 2h15v9c0 4-3 7-7 7s-8-3-8-7z" fill="#fff" stroke={INK} strokeWidth="1.5" /><path d="M7 4H1c0 5 2 9 7 10M22 4h6c0 5-2 9-7 10M15 18v5" stroke={INK} strokeWidth="1.5" /><rect x="7" y="1" width="15" height="4" fill="#83bdf0" stroke="#1170b8" /><rect x="8" y="23" width="13" height="4" fill="#83bdf0" stroke="#1170b8" /></Tile>,

    <Tile><path d="M3 1h15l8 8v19H3z" fill="#fff" stroke={INK} strokeWidth="1.5" /><path d="M18 1v8h8" stroke={INK} strokeWidth="1.3" /><rect x="7" y="19" width="4" height="6" fill={INK} /><rect x="13" y="15" width="4" height="10" fill={INK} /><rect x="19" y="12" width="4" height="13" fill={INK} /></Tile>,
    <Tile><rect x="1" y="7" width="27" height="20" fill="#fff" stroke={INK} strokeWidth="1.5" /><text x="16" y="21" textAnchor="middle" fontSize="12" fill="#1f7fc9" fontFamily={UI_FONT}>123</text><path d="M5 24h20" stroke="#8a8886" /><Lightning /></Tile>,
    <Tile><rect x="14" y="1" width="13" height="12" fill="#fff" stroke="#8a8886" strokeWidth="1.3" /><rect x="1" y="16" width="11" height="11" fill="#fff" stroke="#8a8886" strokeWidth="1.3" /><path d="M13 15h15l-5 6v7h-5v-7z" fill="#fff" stroke={INK} strokeWidth="1.5" /><Lightning /></Tile>,
    <Tile><path d="M1 1h26v26H1z" fill="#fff" stroke="#1170b8" strokeWidth="1.8" /><path d="M12 3h14v9l-6 3-3 8-12 3-1-12 8-3z" fill="#83bdf0" /><path d="M1 0h8v8l-4 6-4-6z" fill="#d9650c" /><circle cx="5" cy="6" r="1.6" fill="#fff" /><circle cx="24" cy="23" r="4" fill="#d9650c" /><circle cx="28" cy="14" r="2" fill="#d9650c" /></Tile>,
    <Tile><g stroke="#8a3fa8" strokeWidth="1.7" fill="none"><path d="M14 1l13 13-13 13L1 14z" /><path d="M7.5 7.5L21 21M20.5 7.5L7 21" /></g></Tile>,
    <Tile><g stroke="#0f78d4" strokeWidth="1.6" fill="none"><path d="M1 3h16l11 11-11 11H1l11-11z" /><path d="M6 22L20 9M11 25l13-13" /></g></Tile>,
];

const BuildIcon = () => (
    <Svg w={36} h={38}>
        <path d="M3 2h26" stroke="#252423" strokeWidth="1.4" />
        <rect x="3" y="9" width="30" height="11" fill={GREEN} stroke="#252423" strokeDasharray="2 1.5" />
        <rect x="3" y="25" width="30" height="11" fill={GREEN} stroke="#252423" strokeDasharray="2 1.5" />
    </Svg>
);
const FormatIcon = () => (
    <Svg w={38} h={38}>
        <path d="M4 36H1V1h15l9 11v9M16 1v11h9" stroke="#252423" strokeWidth="1.5" />
        <path d="M36 14L21 29" stroke="#252423" strokeWidth="2.2" />
        <path d="M20 27c-3 0-4 2-5 4-1 3-4 4-7 4 5 2 13 2 15-4z" fill="#fff" stroke="#252423" strokeWidth="1.4" />
    </Svg>
);

// --- tree icons ------------------------------------------------------------

const SigmaIcon = () => (
    <Svg w={17} h={17}>
        <path d="M15 1H1.5L8.5 8.5 1.5 16H15" stroke="#323130" strokeWidth="1.4" />
    </Svg>
);
const MeasureCalcIcon = () => (
    <Svg w={23} h={23}>
        <path d="M12 16H4c-2 0-3-1-3-3V4c0-2 1-3 3-3h10c2 0 3 1 3 3v4M1 6h16M6 1v15" stroke="#323130" strokeWidth="1.3" />
        <path d="M22 10H11l5 5-5 6h11" stroke="#323130" strokeWidth="1.4" fill="#f3f2f1" />
    </Svg>
);
const CalendarIcon = () => (
    <Svg w={18} h={18}>
        <rect x="1" y="1" width="16" height="16" rx="3" stroke="#323130" strokeWidth="1.3" />
        <path d="M1 5h16" stroke="#323130" strokeWidth="1.3" />
        <path d="M5 9h1.6M8.2 9h1.6M11.4 9H13M5 12.5h1.6M8.2 12.5h1.6" stroke="#323130" strokeWidth="1.5" />
    </Svg>
);
const TableGlyph = () => (
    <Svg w={18} h={18}>
        <rect x="1" y="1" width="16" height="16" rx="2.5" stroke="#323130" strokeWidth="1.4" />
        <path d="M1 6.5h16M1 11.5h16M6.5 1v16M11.5 1v16" stroke="#323130" strokeWidth="1.4" />
    </Svg>
);

// --- charts ----------------------------------------------------------------

const GRID = '#c8c6c4';
const Dotted = ({ d }) => <path d={d} stroke={GRID} strokeWidth="1" strokeDasharray="1 3" />;

const toPoints = pts => pts.map(([x, y]) => `${x},${y}`).join(' ');

const forecastY = [620, 655, 655, 645, 655, 550, 287, 590, 640, 635, 612, 595, 605, 635, 637, 622, 628, 538, 260, 560, 610, 603, 580, 562, 568, 596, 600, 585, 596, 480, 243, 560, 573];
const actualY = [597, 635, 650, 640, 662, 560, 320, 620, 632, 630, 605, 580, 625, 632, 645, 632, 628, 560, 185, 580, 615, 608, 590, 562, 570, 605, 603, 570, 590, 490, 215, 560, 585];
const salesPoints = ys => ys.map((y, i) => [172 + i * 7.68, 190 + y / 3]);

const salesLabels = [
    ['4.7K', 173, 378], ['12.3K', 218, 284], ['13.0K', 218, 297], ['2.9K', 202, 402],
    ['3.2K', 202, 420], ['3.6K', 233, 414], ['3.7K', 279, 390], ['3.5K', 279, 416],
    ['15.6K', 310, 264], ['13.7K', 310, 288], ['4.7K', 371, 402], ['14.8K', 402, 252],
    ['14.1K', 402, 261], ['5.1K', 416, 396],
];

const SalesChart = () => {
    const actual = salesPoints(actualY);
    const forecast = salesPoints(forecastY);
    const area = toPoints([[172, 424], ...forecast, [417.8, 424]]);
    return (
        <Plot $top={4} width="330" height="216" viewBox="145 240 330 216">
            <Dotted d="M256 248V424M348 248V424M420 261h8M420 323h8M420 386h8" />
            <polygon points={area} fill="#6687d6" />
            <polyline points={toPoints([[172, 424], [417.8, 424]])} stroke="#a8bbe8" strokeWidth="1.4" />
            <polyline points={toPoints(actual)} stroke={BLUE} strokeWidth="2.2" fill="none" strokeLinejoin="round" />
            <polyline points={toPoints(forecast)} stroke={NAVY} strokeWidth="2.2" fill="none" strokeLinejoin="round" />
            {salesLabels.map(([text, x, y]) => (
                <DataLabel key={`${text}${y}`} x={x} y={y}>{text}</DataLabel>
            ))}
            <Tick x="433" y="261">15K</Tick>
            <Tick x="433" y="323">10K</Tick>
            <Tick x="433" y="386">5K</Tick>
            <Tick x="256" y="432" textAnchor="middle">2011</Tick>
            <Tick x="348" y="432" textAnchor="middle">2012</Tick>
            <AxisTitle x="295" y="448">Year</AxisTitle>
            <AxisTitle x="151" y="336" transform="rotate(-90 151 336)">Actual Sales</AxisTitle>
            <AxisTitle x="460" y="336" transform="rotate(-90 460 336)">Forecasted Sales</AxisTitle>
        </Plot>
    );
};

const bandRows = [
    { year: '2012', top: 252, lower: 724, upper: 815 },
    { year: '2011', top: 322, lower: 690, upper: 780 },
    { year: '2010', top: 392, lower: 668, upper: 757 },
];
const bandTicks = [['0K', 553], ['2K', 621], ['4K', 688], ['6K', 755], ['8K', 822]];

const BandChart = () => (
    <Plot $top={3} width="330" height="214" viewBox="507 244 330 214">
        <Dotted d="M621 250V429M688 250V429M755 250V429M822 250V429M553 270H822M553 340H822M553 410H822" />
        {bandRows.map(r => (
            <g key={r.year}>
                <rect x="553" y={r.top} width={r.lower - 553} height="18.5" fill={BLUE} />
                <rect x="553" y={r.top + 18.5} width={r.upper - 553} height="18.5" fill={NAVY} />
                <Tick x="545" y={r.top + 19} textAnchor="end">{r.year}</Tick>
            </g>
        ))}
        {bandTicks.map(([t, x]) => (
            <Tick key={t} x={x} y="438" textAnchor="middle">{t}</Tick>
        ))}
        <AxisTitle x="513" y="340" transform="rotate(-90 513 340)">Year</AxisTitle>
        <AxisTitle x="687" y="452">Lower sales Forecast and Upper sales forecast</AxisTitle>
    </Plot>
);

const uncertaintyRaw = [
    [299, 740], [322, 610], [347, 548], [372, 615], [396, 663], [420, 418], [445, 825], [470, 408], [495, 645],
    [519, 600], [544, 578], [569, 638], [594, 575], [618, 535], [642, 525], [666, 452], [691, 212], [716, 698],
    [741, 465], [766, 620], [790, 558], [815, 505], [839, 470], [864, 610], [889, 315], [913, 598], [938, 388],
    [962, 752], [987, 358], [1012, 505], [1036, 245], [1061, 433], [1086, 270],
];
const uncertainty = uncertaintyRaw.map(([x, y]) => [60 + x / 3, 450 + y / 3]);
const gridYs = [489, 524, 559, 595, 630, 665, 701, 736];
const uncertaintyTicks = ['2,760', '2,740', '2,720', '2,700', '2,680', '2,660', '2,640', '2,620'];

const UncertaintyChart = () => (
    <Plot $top={2} width="336" height="286" viewBox="104 481 336 286">
        <Dotted d={`${gridYs.map(y => `M151 ${y}H430`).join('')}M250 489V736M349 489V736`} />
        <polygon points={toPoints([[160, 736], ...uncertainty, [422, 736]])} fill="#a0d1ff" />
        <polyline points={toPoints(uncertainty)} stroke={BLUE} strokeWidth="2.4" fill="none" />
        {uncertaintyTicks.map((t, i) => (
            <Tick key={t} x="144" y={gridYs[i]} textAnchor="end">{t}</Tick>
        ))}
        <Tick x="250" y="745" textAnchor="middle">2011</Tick>
        <Tick x="349" y="745" textAnchor="middle">2012</Tick>
        <AxisTitle x="291" y="760">Year</AxisTitle>
        <AxisTitle x="111" y="612" transform="rotate(-90 111 612)">Forecasted Uncertainity</AxisTitle>
    </Plot>
);

const errorTicks = ['80', '60', '40', '20', '0', '-20', '-40', '-60'];

const ErrorChart = () => (
    <Plot $top={2} width="340" height="286" viewBox="448 481 340 286">
        <Dotted d={`${gridYs.map(y => `M487 ${y}H773`).join('')}M495 489V736M630 489V736M765 489V736`} />
        <polyline points="495,619 630,728 765,513" stroke={BLUE} strokeWidth="2.6" fill="none" />
        {errorTicks.map((t, i) => (
            <Tick key={t} x="479" y={gridYs[i]} textAnchor="end">{t}</Tick>
        ))}
        <Tick x="495" y="745" textAnchor="middle">2010</Tick>
        <Tick x="630" y="745" textAnchor="middle">2011</Tick>
        <Tick x="765" y="745" textAnchor="middle">2012</Tick>
        <AxisTitle x="630" y="760">Year</AxisTitle>
        <AxisTitle x="454" y="612" transform="rotate(-90 454 612)">Forecast Error</AxisTitle>
    </Plot>
);

// --- ribbon data -----------------------------------------------------------

const Button = ({ w, icon, lines, off, caret }) => (
    <RibbonButton $w={w} $off={off}>
        <IconSlot>{icon}</IconSlot>
        {lines.map((line, i) => (
            <ButtonLine key={line || i} $first={i === 0}>
                {line}
                {caret && i === lines.length - 1 && <Chevron color={off ? '#bdbbb9' : INK} />}
            </ButtonLine>
        ))}
    </RibbonButton>
);

const ribbonGroups = [
    {
        label: 'Data',
        w: 536,
        buttons: [
            { w: 84, icon: <GetDataIcon />, lines: ['Get', 'data'], caret: true },
            { w: 62, icon: <ExcelIcon />, lines: ['Excel', 'workbook'] },
            { w: 102, icon: <OneLakeIcon />, lines: ['OneLake', 'catalog'], caret: true },
            { w: 40, icon: <SqlIcon />, lines: ['SQL', 'Server'] },
            { w: 80, icon: <EnterIcon />, lines: ['Enter', 'data'] },
            { w: 64, icon: <DataverseIcon />, lines: ['Dataverse'] },
            { w: 100, icon: <RecentIcon />, lines: ['Recent', 'sources'], caret: true },
        ],
    },
    {
        label: 'Queries',
        w: 173,
        buttons: [
            { w: 110, icon: <TransformIcon />, lines: ['Transform', 'data'], caret: true },
            { w: 40, icon: <RefreshIcon />, lines: ['Refresh'] },
        ],
    },
    {
        label: 'Insert',
        w: 221,
        buttons: [
            { w: 86, icon: <NewVisualIcon />, lines: ['New', 'visual'] },
            { w: 34, icon: <TextBoxIcon />, lines: ['Text', 'box'] },
            { w: 100, icon: <MoreVisualsIcon />, lines: ['More', 'visuals'], caret: true },
        ],
    },
    {
        label: 'Calculations',
        w: 277,
        buttons: [
            { w: 134, icon: <VisualCalcIcon />, lines: ['New visual', 'calculation'], off: true, caret: true },
            { w: 44, icon: <MeasureIcon />, lines: ['New', 'measure'] },
            { w: 98, icon: <QuickMeasureIcon />, lines: ['Quick', 'measure'] },
        ],
    },
    {
        label: 'Sensitivity',
        w: 111,
        buttons: [{ w: 111, icon: <SensitivityIcon />, lines: ['Sensitivity', ''], off: true, caret: true }],
    },
    {
        label: 'Share',
        w: 87,
        buttons: [{ w: 87, icon: <PublishIcon />, lines: ['Publish'] }],
    },
    {
        label: 'Copilot',
        w: 197,
        buttons: [
            { w: 132, icon: <PrepIcon />, lines: ['Prep data for', 'AI'] },
            { w: 42, icon: <CopilotIcon />, lines: ['Copilot'] },
        ],
    },
];

const fields = [
    { name: 'Actual_Sales', icon: <SigmaIcon /> },
    { name: 'Confidence ban...', icon: <MeasureCalcIcon /> },
    { name: 'Date', icon: <CalendarIcon />, expandable: true },
    { name: 'Forecast_Error', icon: <MeasureCalcIcon /> },
    { name: 'yhat', icon: <SigmaIcon /> },
    { name: 'yhat_lower', icon: <SigmaIcon /> },
    { name: 'yhat_upper', icon: <SigmaIcon /> },
];

const kpis = [
    { value: '2.68K', label: 'Average of Confidence band Width', top: 57, shift: 18 },
    { value: '1.20', label: 'Average of Forecast_Error', top: 91 },
    { value: '5.51K', label: 'Average of Actual_Sales', top: 73 },
    { value: '5.51K', label: 'Average of Forecasted Sales', top: 55 },
];

const App = () => (
    <Page>
        <Global />
        <TitleBar><TitleSlot /></TitleBar>
        <TabRow>
            <Tab $weight={600} $after={9}>File</Tab>
            <Tab $active $weight={500}>Home</Tab>
            <Tab>Insert</Tab>
            <Tab>Modeling</Tab>
            <Tab>View</Tab>
            <Tab>Optimize</Tab>
            <Tab>Help</Tab>
            <ShareButton>
                <Svg w={24} h={24}>
                    <path d="M2 8v14h17v-5M6 17c0-7 5-10 11-10V2l6 7-6 7v-5c-5 0-8 2-11 6z" stroke="#fff" strokeWidth="1.4" />
                </Svg>
                Share
                <Chevron color="#fff" size={13} />
            </ShareButton>
        </TabRow>
        <Ribbon>
            <Group $w={240}>
                <GroupBody>
                    <PasteColumn>
                        <Button w={84} off icon={<PasteIcon />} lines={['Paste']} />
                    </PasteColumn>
                    <ClipList>
                        <ClipRow><ClipIcon><CutIcon /></ClipIcon>Cut</ClipRow>
                        <ClipRow><ClipIcon><CopyIcon /></ClipIcon>Copy</ClipRow>
                        <ClipRow><ClipIcon><BrushIcon /></ClipIcon>Format painter</ClipRow>
                    </ClipList>
                </GroupBody>
                <GroupLabel>Clipboard</GroupLabel>
            </Group>
            {ribbonGroups.map(group => (
                <Group key={group.label} $w={group.w}>
                    <GroupBody>
                        {group.buttons.map(b => (
                            <Button key={b.lines[0]} {...b} />
                        ))}
                    </GroupBody>
                    <GroupLabel>{group.label}</GroupLabel>
                </Group>
            ))}
            <Collapse>
                <Svg w={14} h={12}>
                    <path d="M2 9l5-5 5 5" stroke="#252423" strokeWidth="1.8" />
                </Svg>
            </Collapse>
        </Ribbon>
        <Workspace>
            <NavRail>
                <NavItem $active $top={1}><ReportNav /></NavItem>
                <NavItem><TableNav /></NavItem>
                <NavItem><ModelNav /></NavItem>
                <NavItem><DaxNav /></NavItem>
            </NavRail>
            <Canvas>
                <BackButton>
                    <Svg w={24} h={24}>
                        <circle cx="12" cy="12" r="11" stroke="#605e5c" strokeWidth="1.8" />
                        <path d="M18 12H6M11 6.5L5.5 12l5.5 5.5" stroke="#605e5c" strokeWidth="1.8" />
                    </Svg>
                </BackButton>
                <Board>
                    <ChartsColumn>
                        <ChartRow>
                            <Visual $w={425} $left={83} $top={2}>
                                <VisualTitle>Actual vs Forecasted sales by year</VisualTitle>
                                <Legend $top={7} $left={0}>
                                    <LegendDot $color={BLUE} />Actual Sales
                                    <LegendDot $color={NAVY} $gap={4} />Forecasted Sales
                                </Legend>
                                <SalesChart />
                            </Visual>
                            <Visual $w={353} $left={20} $top={6}>
                                <VisualTitle>Forecasted upper and lower sales by year</VisualTitle>
                                <Legend $top={8} $left={1}>
                                    <LegendDot $color={BLUE} />Lower sales Forecast
                                    <LegendDot $color={NAVY} $gap={4} />Upper sales forecast
                                </Legend>
                                <BandChart />
                            </Visual>
                        </ChartRow>
                        <ChartRow>
                            <Visual $w={378} $left={42} $top={5}>
                                <VisualTitle>Forecasted Uncertainity by Year and Month</VisualTitle>
                                <UncertaintyChart />
                            </Visual>
                            <Visual $w={400} $left={8} $top={5}>
                                <VisualTitle>Forecast Error by Year</VisualTitle>
                                <ErrorChart />
                            </Visual>
                        </ChartRow>
                    </ChartsColumn>
                    <KpiColumn>
                        {kpis.map(k => (
                            <Kpi key={k.label} $top={k.top} $shift={k.shift}>
                                <KpiValue>{k.value}</KpiValue>
                                <KpiLabel>{k.label}</KpiLabel>
                            </Kpi>
                        ))}
                    </KpiColumn>
                </Board>
            </Canvas>
            <FiltersPane>
                <PaneHead $left={15}>
                    <Svg w={27} h={24}>
                        <path d="M1.5 1.5h24L16.5 12v10h-6V12z" stroke="#252423" strokeWidth="2" />
                    </Svg>
                    <PaneTitle $gap={12}>Filters</PaneTitle>
                    <HeadIcons $right={15}>
                        <Svg w={20} h={14}>
                            <path d="M1 9c5-10 13-10 18 0" stroke="#252423" strokeWidth="1.6" />
                            <circle cx="10" cy="9" r="3.2" stroke="#252423" strokeWidth="1.6" />
                        </Svg>
                        <DoubleChevron />
                    </HeadIcons>
                </PaneHead>
                <FilterSearch>
                    <Svg w={24} h={24}>
                        <circle cx="15" cy="9" r="7.5" stroke="#484644" strokeWidth="1.3" />
                        <path d="M9.5 14.5L1 23" stroke="#484644" strokeWidth="1.3" />
                    </Svg>
                    Search
                </FilterSearch>
                <PaneRule />
                <FilterHead $top={24}>Filters on this page<Dots>...</Dots></FilterHead>
                <DropBox>Add data fields here</DropBox>
                <FilterHead $top={39}>Filters on all pages<Dots>...</Dots></FilterHead>
                <DropBox>Add data fields here</DropBox>
            </FiltersPane>
            <VizPane>
                <PaneHead $left={13}>
                    <PaneTitle>Visualizations</PaneTitle>
                    <HeadIcons $right={11}><DoubleChevron /></HeadIcons>
                </PaneHead>
                <BuildLabel>Build visual</BuildLabel>
                <BuildTabs>
                    <BuildTile><BuildIcon /></BuildTile>
                    <FormatIcon />
                    <Notch />
                </BuildTabs>
                <VizGrid>
                    {galleryTiles.map((tile, i) => (
                        <React.Fragment key={i}>{tile}</React.Fragment>
                    ))}
                    <Dots $color="#605e5c" $spread={4} $lift={-14}>...</Dots>
                </VizGrid>
                <WellRule />
                <FieldWell>Add data fields here</FieldWell>
                <DrillTitle>Drill through</DrillTitle>
                <ToggleRow $top={14}>Cross-report<Toggle><ToggleKnob />Off</Toggle></ToggleRow>
                <ToggleRow $top={16}>Keep all filters<Toggle $on><ToggleKnob $on />On</Toggle></ToggleRow>
                <NextWell />
                <ScrollThumb />
            </VizPane>
            <DataPane>
                <PaneHead $left={13}>
                    <PaneTitle>Data</PaneTitle>
                    <HeadIcons $right={10}><DoubleChevron /></HeadIcons>
                </PaneHead>
                <DataSearch>
                    <Svg w={23} h={21}>
                        <circle cx="9" cy="8.5" r="7.5" stroke="#605e5c" strokeWidth="1.5" />
                        <path d="M14.5 14l7 6.5" stroke="#605e5c" strokeWidth="1.5" />
                    </Svg>
                    Search
                </DataSearch>
                <Tree>
                    <TreeHead>
                        <Svg w={17} h={10}>
                            <path d="M1 1l7.5 8L16 1" stroke="#484644" strokeWidth="1.2" />
                        </Svg>
                        <TableGlyph />
                        <TreeName>actual_vs_forecast</TreeName>
                    </TreeHead>
                    {fields.map(f => (
                        <TreeRow key={f.name}>
                            <Expander>
                                {f.expandable && (
                                    <Svg w={9} h={16}>
                                        <path d="M1 1l7 7-7 7" stroke="#484644" strokeWidth="1.2" />
                                    </Svg>
                                )}
                            </Expander>
                            <CheckBox />
                            <FieldIcon>{f.icon}</FieldIcon>
                            {f.name}
                        </TreeRow>
                    ))}
                </Tree>
            </DataPane>
        </Workspace>
    </Page>
);

export default App;
